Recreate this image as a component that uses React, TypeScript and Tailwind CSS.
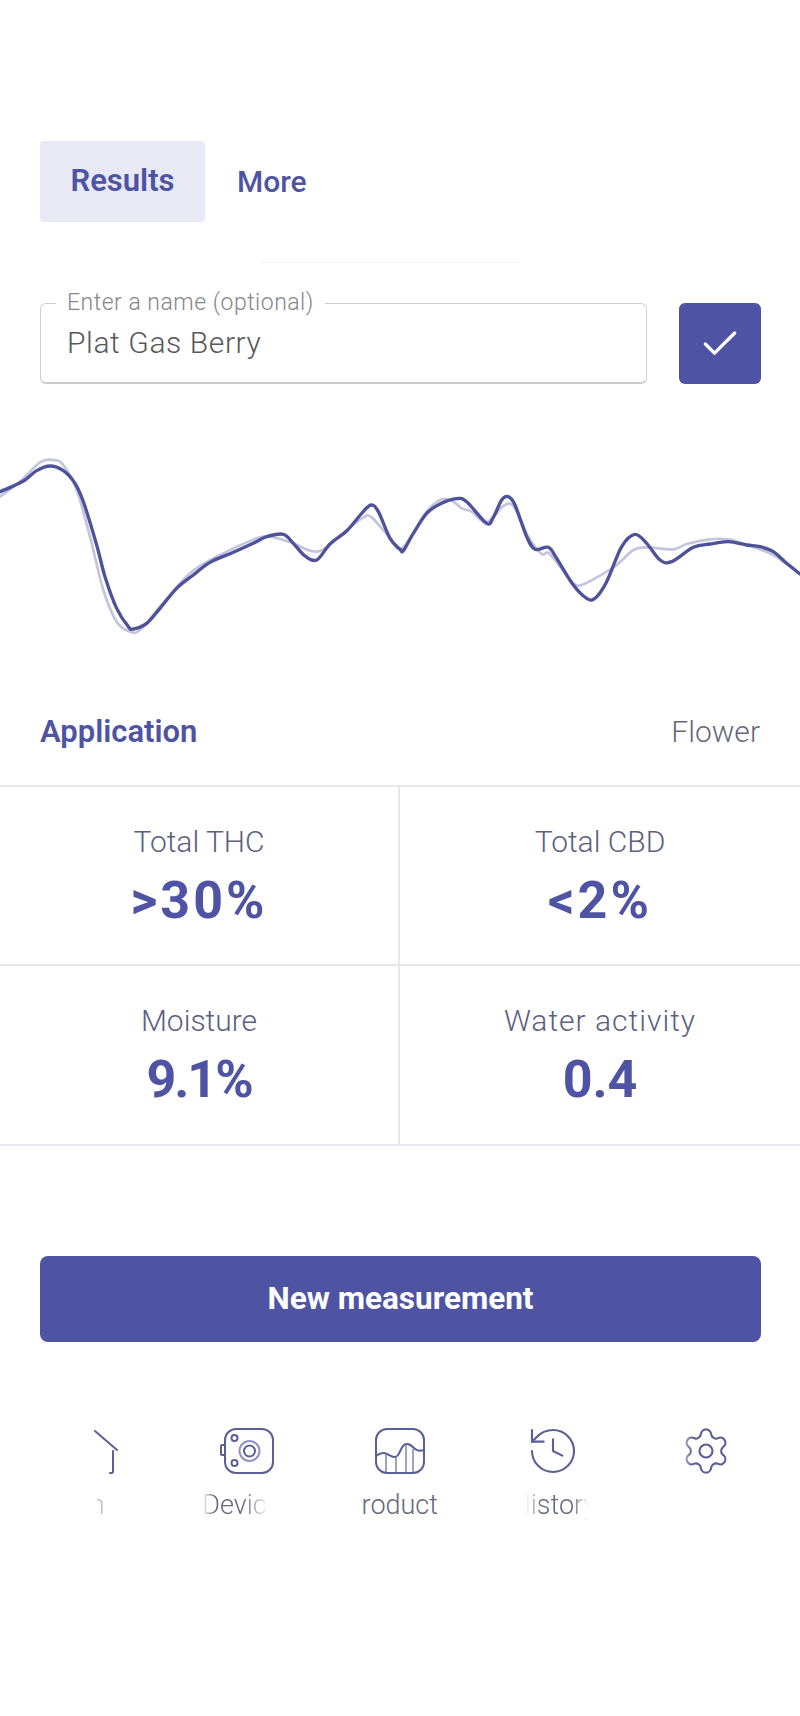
import { Check, History, Settings } from 'lucide-react';

const darkLine = [
  [0, 185], [40, 168], [75, 150], [110, 122], [150, 108], [190, 122], [225, 160], [250, 215], [290, 345], [315, 440], [350, 535], [385, 590],
  [400, 597], [440, 580], [480, 535], [530, 475], [580, 435], [630, 397], [700, 367], [760, 340], [800, 320], [850, 313],
  [880, 340], [915, 378], [950, 390], [990, 342], [1040, 303], [1085, 250], [1113, 225], [1135, 245], [1170, 325], [1200, 358],
  [1210, 362], [1240, 310], [1280, 250], [1320, 222], [1370, 206], [1400, 215], [1460, 280], [1480, 262], [1505, 210], [1525, 200],
  [1545, 225], [1580, 320], [1605, 358], [1645, 352], [1670, 385], [1720, 465], [1760, 505], [1785, 505], [1820, 455], [1865, 350],
  [1905, 313], [1940, 340], [1980, 390], [2015, 395], [2080, 352], [2130, 342], [2185, 335], [2240, 345], [2280, 350], [2320, 365],
  [2360, 400], [2400, 432],
];

const lightLine = [
  [0, 200], [60, 155], [120, 97], [160, 90], [190, 105], [230, 180], [270, 320], [310, 480], [350, 575], [390, 605],
  [420, 600], [480, 530], [570, 430], [650, 380], [770, 325], [810, 320], [850, 330], [880, 340], [930, 362], [970, 358],
  [1040, 300], [1090, 262], [1115, 262], [1170, 325], [1200, 358], [1240, 310], [1280, 245], [1325, 208], [1360, 215], [1385, 235],
  [1415, 245], [1455, 278], [1485, 255], [1510, 228], [1540, 228], [1585, 320], [1625, 372], [1645, 368], [1680, 410], [1720, 460],
  [1745, 465], [1800, 437], [1850, 405], [1900, 360], [1940, 352], [2020, 358], [2060, 342], [2130, 328], [2185, 328], [2240, 345],
  [2320, 375], [2400, 432],
];

// catmull-rom through the traced points
function smooth(points: number[][]) {
  let d = `M${points[0][0]} ${points[0][1]}`;
  for (let i = 0; i < points.length - 1; i++) {
    const p0 = points[i - 1] || points[i];
    const p1 = points[i];
    const p2 = points[i + 1];
    const p3 = points[i + 2] || p2;
    const c1x = p1[0] + (p2[0] - p0[0]) / 6;
    const c1y = p1[1] + (p2[1] - p0[1]) / 6;
    const c2x = p2[0] - (p3[0] - p1[0]) / 6;
    const c2y = p2[1] - (p3[1] - p1[1]) / 6;
    d += ` C${c1x} ${c1y} ${c2x} ${c2y} ${p2[0]} ${p2[1]}`;
  }
  return d;
}

function Stat({ label, value, className, labelClass = '', valueClass = '' }: { label: string; value: string; className: string; labelClass?: string; valueClass?: string }) {
  return (
    <div className={`h-[178.5px] flex flex-col items-center pt-[35px] border-[#e6e7ed] ${className}`}>
      <div className={`text-[30px] leading-[40px] font-light text-[#5c5f80] ${labelClass}`}>{label}</div>
      <div className={`text-[52px] leading-[60px] mt-[9px] font-bold text-[#4e54a3] ${valueClass}`}>{value}</div>
    </div>
  );
}

function HomeIcon() {
  return (
    <svg width="48" height="46" viewBox="0 0 48 46" fill="none" stroke="#5a5f95" strokeWidth="2" strokeLinecap="round" strokeLinejoin="round">
      <path d="M25 3 47 22" />
      <path d="M43 23V43.5Q43 45 41 45H40" />
    </svg>
  );
}

function DeviceIcon() {
  return (
    <svg width="54" height="46" viewBox="0 0 54 46" fill="none" stroke="#5a5f95" strokeWidth="2">
      <rect x="5" y="1" width="48" height="44" rx="11" />
      <path d="M5 17H2Q1 17 1 18V26Q1 27 2 27H5" />
      <circle cx="14.500" cy="10" r="3" />
      <circle cx="14.500" cy="35" r="3" />
      <circle cx="29.500" cy="23" r="10" stroke="#8f93c4" />
      <circle cx="29.500" cy="23" r="5.500" />
    </svg>
  );
}

function ProductIcon() {
  return (
    <svg width="50" height="46" viewBox="0 0 50 46" fill="none" stroke="#5a5f95" strokeWidth="2">
      <rect x="1" y="1" width="48" height="44" rx="11" />
      <path d="M1 28C5 25 8 24 12 26S20 31 23 27 27 15 33 16 39 25 49 22" />
      <path d="M11 26V44M21 29V44M31 17V44M38 21V44" strokeWidth="1.500" stroke="#8084b0" />
    </svg>
  );
}

export default function App() {
  return (
    <div className="w-[800px] h-[1716px] bg-white overflow-hidden pt-[141px] font-['Roboto',sans-serif]">
      <div className="flex items-center px-10">
        <div className="w-[165px] h-[81px] rounded-[4px] bg-[#e8e9f4] flex items-center justify-center text-[31px] font-semibold text-[#4e54a3]">Results</div>
        <div className="ml-8 text-[30px] font-medium text-[#4e54a3]">More</div>
      </div>

      <div className="w-[260px] h-px ml-[260px] mt-[40px] bg-[#f4f4f6]" />

      <div className="flex gap-8 pl-10 pr-[39px] mt-[40px]">
        <div className="relative flex-1 h-[81px] rounded-[6px] border border-b-2 border-[#cdcdd0] flex items-center pl-[26px] pb-[2px]">
          <label className="absolute left-[15px] top-[-15px] bg-white px-[11px] text-[23px] leading-[28px] tracking-[0.5px] font-light text-[#85858a]">Enter a name (optional)</label>
          <input readOnly value="Plat Gas Berry" className="w-full text-[30px] font-light tracking-[0.6px] text-[#58585c] outline-none" />
        </div>
        <div className="w-[82px] h-[81px] rounded-[6px] bg-[#4e54a3] flex items-center justify-center">
          <Check size={44} strokeWidth={1.8} className="text-white" />
        </div>
      </div>

      <svg className="block mt-[46px] w-[800px] h-[230px]" viewBox="0 0 2400 690" fill="none" strokeLinecap="round" strokeLinejoin="round">
        <path d={smooth(lightLine)} stroke="#c3c5df" strokeWidth="8" />
        <path d={smooth(darkLine)} stroke="#4e5298" strokeWidth="10" />
      </svg>

      <div className="flex items-center justify-between px-10 pt-[52px] pb-[33px]">
        <div className="text-[31px] leading-[40px] font-semibold text-[#4e54a3]">Application</div>
        <div className="text-[30px] leading-[40px] font-light text-[#66687c]">Flower</div>
      </div>

      <div className="grid grid-cols-2 border-t-2 border-b-2 border-[#e6e7ed]">
        <Stat label="Total THC" value=">30%" className="border-r-2 border-b-2" valueClass="tracking-[3px]" />
        <Stat label="Total CBD" value="<2%" className="border-b-2" valueClass="tracking-[3px]" />
        <Stat label="Moisture" value="9.1%" className="border-r-2" valueClass="tracking-[-2px]" />
        <Stat label="Water activity" value="0.4" className="" labelClass="tracking-[1px]" />
      </div>

      <div className="pl-10 pr-[39px] mt-[110px]">
        <div className="h-[86px] rounded-[8px] bg-[#4e54a3] flex items-center justify-center text-[31.500px] font-bold text-white">New measurement</div>
      </div>

      <div className="grid grid-cols-5 px-[17px] mt-[86px]">
        <div className="flex flex-col items-center">
          <HomeIcon />
          <div className="w-[8px] ml-[14px] mt-[11px] flex justify-end overflow-hidden opacity-40 text-[27px] leading-[40px] font-light text-[#66687c]">
            <span className="shrink-0">Main</span>
          </div>
        </div>
        <div className="flex flex-col items-center">
          <DeviceIcon />
          <div className="w-[67px] mr-[22px] mt-[11px] flex overflow-hidden text-[27px] leading-[40px] font-light text-[#66687c] [mask-image:linear-gradient(90deg,transparent,black_20%,black_60%,transparent)]">
            <span className="shrink-0">Device</span>
          </div>
        </div>
        <div className="flex flex-col items-center">
          <ProductIcon />
          <div className="w-[76px] mt-[11px] flex justify-end overflow-hidden text-[27px] leading-[40px] font-light text-[#66687c]">
            <span className="shrink-0">Product</span>
          </div>
        </div>
        <div className="flex flex-col items-center">
          <History size={56} strokeWidth={0.9} className="text-[#5a5f95] my-[-5px]" />
          <div className="w-[62px] ml-[7px] mt-[11px] flex overflow-hidden text-[27px] leading-[40px] font-light text-[#66687c] [mask-image:linear-gradient(90deg,transparent,black_25%,black_75%,transparent)]">
            <span className="shrink-0 ml-[-14px]">History</span>
          </div>
        </div>
        <div className="flex flex-col items-center">
          <Settings size={52} strokeWidth={1} className="text-[#5a5f95] my-[-3px] [mask-image:linear-gradient(90deg,rgba(0,0,0,0.3),black_25%)]" />
        </div>
      </div>
    </div>
  );
}
